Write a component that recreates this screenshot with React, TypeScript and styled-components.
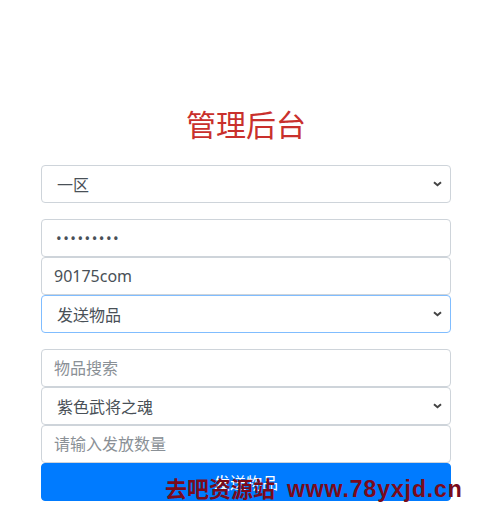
import styled, { createGlobalStyle } from 'styled-components';

const GlobalStyle = createGlobalStyle`
  html, body {
    margin: 0;
    padding: 0;
    background: #fff;
    font-family: "Noto Sans", "Noto Sans CJK SC", sans-serif;
  }
`;

const Page = styled.div`
  position: relative;
  width: 488px;
  height: 529px;
  overflow: hidden;
  box-sizing: border-box;
  padding: 105px 37px 0 41px;
`;

const Title = styled.h3`
  margin: 0 0 24px;
  text-align: center;
  font-family: "Noto Sans CJK SC", sans-serif;
  font-weight: 400;
  font-size: 30px;
  line-height: 36px;
  color: #c9302c;
`;

const Group = styled.div`
  display: flex;
  flex-direction: column;
  margin-bottom: 16px;
`;

const Field = styled.input`
  box-sizing: border-box;
  display: block;
  width: 100%;
  height: 38px;
  margin: 0;
  padding: 6px 12px;
  font-family: "Noto Sans", "Noto Sans CJK SC", sans-serif;
  font-size: 16px;
  color: #495057;
  background: #fff;
  border: 1px solid #ced4da;
  border-radius: 4px;
  outline: none;
  &::placeholder {
    color: #8a9096;
    font-family: "Noto Sans CJK SC", sans-serif;
  }
  &[type='password'] {
    padding-left: 14px;
    letter-spacing: 1.5px;
    font-size: 15px;
  }
`;

const chevron =
  "data:image/svg+xml;utf8,<svg xmlns='http://www.w3.org/2000/svg' width='9' height='6' viewBox='0 0 9 6'><path d='M1 1.2l3.5 3L8 1.2' fill='none' stroke='%23444' stroke-width='2'/></svg>";

const Select = styled.select<{ $focused?: boolean }>`
  box-sizing: border-box;
  display: block;
  width: 100%;
  height: 38px;
  margin: 0;
  padding: 6px 12px 6px 15px;
  font-family: "Noto Sans CJK SC", sans-serif;
  font-size: 16px;
  color: #495057;
  background: #fff url("${chevron}") no-repeat right 8px center;
  border: 1px solid ${(p) => (p.$focused ? '#80bdff' : '#ced4da')};
  border-radius: 4px;
  appearance: none;
  outline: none;
`;

const Button = styled.button`
  box-sizing: border-box;
  display: block;
  width: 100%;
  height: 38px;
  padding: 6px 12px;
  font-family: "Noto Sans CJK SC", sans-serif;
  font-size: 16px;
  color: #fff;
  background: #007bff;
  border: 1px solid #007bff;
  border-radius: 4px;
`;

// site watermark stamped over the bottom of the form
const Watermark = styled.div`
  position: absolute;
  left: 165px;
  top: 474px;
  display: flex;
  align-items: baseline;
  gap: 12px;
  font-family: "Liberation Sans", "Noto Sans CJK SC", sans-serif;
  font-weight: 700;
  line-height: 30px;
  color: #7a0b1c;
  white-space: nowrap;
`;

const MarkName = styled.span`
  font-size: 22px;
`;

const MarkUrl = styled.span`
  font-size: 23px;
  letter-spacing: 0.9px;
`;

export default function App() {
  return (
    <Page>
      <GlobalStyle />
      <Title>管理后台</Title>
      <Group>
        <Select defaultValue="1">
          <option value="1">一区</option>
        </Select>
      </Group>
      <Group>
        <Field type="password" defaultValue="123456789" />
        <Field type="text" defaultValue="90175com" />
        <Select $focused defaultValue="send">
          <option value="send">发送物品</option>
        </Select>
      </Group>
      <Group>
        <Field type="text" placeholder="物品搜索" />
        <Select defaultValue="a">
          <option value="a">紫色武将之魂</option>
        </Select>
        <Field type="text" placeholder="请输入发放数量" />
        <Button>发送物品</Button>
      </Group>
      <Watermark>
        <MarkName>去吧资源站</MarkName>
        <MarkUrl>www.78yxjd.cn</MarkUrl>
      </Watermark>
    </Page>
  );
}
